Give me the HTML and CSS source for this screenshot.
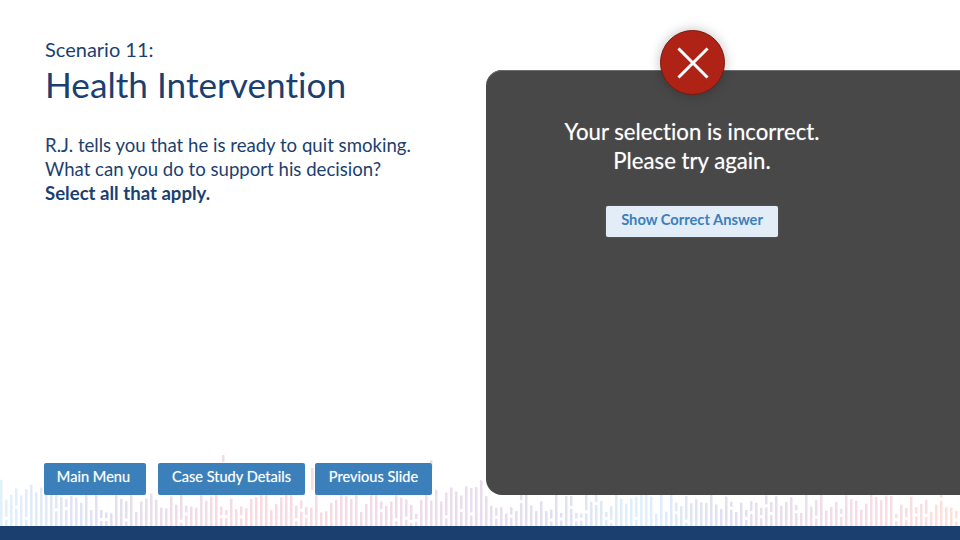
FILE: index.html
```html
<!DOCTYPE html>
<html lang="en">
<head>
    <meta charset="UTF-8">
    <title>Scenario 11: Health Intervention</title>
    <link rel="stylesheet" href="styles.css">
</head>
<body>
    <div class="slide">
        <!-- Waveform behind the buttons -->
        <svg class="wave" id="wave" width="960" height="86" viewBox="0 0 960 86"></svg>

        <div class="content">
            <div class="left">
                <p class="kicker">Scenario 11:</p>
                <h1>Health Intervention</h1>
                <p class="question">R.J. tells you that he is ready to quit smoking.<br>What can you do to support his decision?<br><strong>Select all that apply.</strong></p>
                <div class="nav-buttons">
                    <button class="nav-main">Main Menu</button>
                    <button class="nav-case">Case Study Details</button>
                    <button class="nav-prev">Previous Slide</button>
                </div>
            </div>

            <div class="panel">
                <div class="badge">
                    <svg width="34" height="34" viewBox="0 0 34 34">
                        <path d="M3.5 3.5 L30.5 30.5 M30.5 3.5 L3.5 30.5" stroke="#fff" stroke-width="3" stroke-linecap="square" fill="none"/>
                    </svg>
                </div>
                <p class="feedback">Your selection is incorrect.<br>Please try again.</p>
                <button class="show-answer">Show Correct Answer</button>
            </div>
        </div>

        <div class="footer-bar"></div>
    </div>
    <script src="script.js"></script>
</body>
</html>
```

FILE: styles.css
```css
/* Global Styles */
* {
    margin: 0;
    padding: 0;
    box-sizing: border-box;
}

body {
    font-family: 'Lato', 'Open Sans', sans-serif;
    font-variant-ligatures: none;
    background-color: #fff;
    color: #1b3f70;
    overflow: hidden;
}

button {
    font-family: inherit;
    font-variant-ligatures: none;
    border: none;
    cursor: pointer;
}

.slide {
    position: relative;
    width: 960px;
    height: 540px;
    display: flex;
    flex-direction: column;
}

.wave {
    position: absolute;
    left: 0;
    bottom: 14px;
}

.content {
    position: relative;
    flex: 1;
    display: flex;
}

.footer-bar {
    position: relative;
    height: 14px;
    background-color: #1b3f6e;
}

/* Left Column */
.left {
    width: 486px;
    padding: 38px 0 31px 45px;
    display: flex;
    flex-direction: column;
}

.kicker {
    font-size: 20px;
    line-height: 23px;
}

h1 {
    font-size: 35.2px;
    font-weight: 400;
    line-height: 44px;
    margin-top: 1px;
}

.question {
    font-size: 18.6px;
    line-height: 24px;
    margin-top: 27px;
}

.nav-buttons {
    margin-top: auto;
    margin-left: -1px;
    display: flex;
    gap: 12px;
}

.nav-buttons button {
    height: 32px;
    padding-bottom: 5px;
    background-color: #3b80ba;
    color: #fff;
    font-size: 14.6px;
    border-radius: 2px;
    text-shadow: 0 0 1px rgba(255, 255, 255, 0.5);
}

.nav-main { width: 102px; padding-right: 3px; }
.nav-case { width: 147px; }
.nav-prev { width: 117px; margin-left: -2px; }

/* Feedback Panel */
.panel {
    position: relative;
    flex: 1;
    margin: 70px 0 31px;
    background-color: #484848;
    border-radius: 16px 0 0 16px;
    display: flex;
    flex-direction: column;
    align-items: center;
    padding: 47px 62px 0 0;
    box-shadow: inset 0 1px 0 #6e6e6e;
}

.badge {
    position: absolute;
    left: 174px;
    top: -40px;
    width: 65px;
    height: 65px;
    border-radius: 50%;
    background-color: #ae2315;
    border: 1px solid #7a1a10;
    display: flex;
    align-items: center;
    justify-content: center;
    box-shadow: 0 0 12px rgba(0, 0, 0, 0.25);
}

.feedback {
    color: #fff;
    font-size: 22.2px;
    line-height: 29px;
    text-align: center;
    text-shadow: 0 0 1px rgba(255, 255, 255, 0.5);
}

.show-answer {
    margin-top: 31px;
    width: 172px;
    height: 31px;
    padding-bottom: 6px;
    background-color: #e3edf8;
    color: #3b80ba;
    font-size: 14.7px;
    font-weight: 700;
    border-radius: 2px;
    box-shadow: 0 0 2px rgba(255, 255, 255, 0.2);
}
```

FILE: script.js
```js
// Draw the faint waveform along the bottom of the slide
var svg = document.getElementById("wave");
var seed = 11;

function next() {
    seed = (seed * 9301 + 49297) % 233280;
    return seed / 233280;
}

// Colour stops along the width: [x, r, g, b]
var stops = [
    [0, 226, 240, 250], [100, 224, 224, 240], [250, 250, 218, 226],
    [450, 236, 220, 236], [560, 224, 224, 240], [640, 224, 240, 252],
    [720, 224, 224, 240], [860, 245, 220, 232], [960, 252, 225, 220]
];

function colorAt(x) {
    for (var i = 1; i < stops.length; i++) {
        if (x <= stops[i][0]) {
            var a = stops[i - 1], b = stops[i];
            var t = (x - a[0]) / (b[0] - a[0]);
            return "rgb(" + [1, 2, 3].map(function (k) {
                return Math.round(a[k] + (b[k] - a[k]) * t);
            }).join(",") + ")";
        }
    }
    return "rgb(252,225,220)";
}

function bar(x, y1, y2, fill) {
    return '<rect x="' + x + '" y="' + y1 + '" width="2.5" height="' + (y2 - y1) + '" fill="' + fill + '"/>';
}

var html = "";
for (var x = 0; x < 960; x += 5) {
    var h = 12 + next() * 22;
    if (next() > 0.88) h += 8; // taller bars stand out here and there
    if (x < 60 || (x > 430 && x < 486)) h += 12; // the wave peaks beside the buttons
    var fill = colorAt(x);
    var barTop = 86 - h;
    if (next() > 0.75) {
        // some bars have a small gap in them
        var gap = 86 - 6 - next() * (h - 10);
        html += bar(x, barTop, gap, fill) + bar(x, gap + 3, 86, fill);
    } else {
        html += bar(x, barTop, 86, fill);
    }
}
// the few spikes that rise above the buttons
html += bar(222, 15, 22, colorAt(222)) + bar(430, 20, 30, colorAt(430)) + bar(311, 28, 50, colorAt(311));
svg.innerHTML = html;
```
